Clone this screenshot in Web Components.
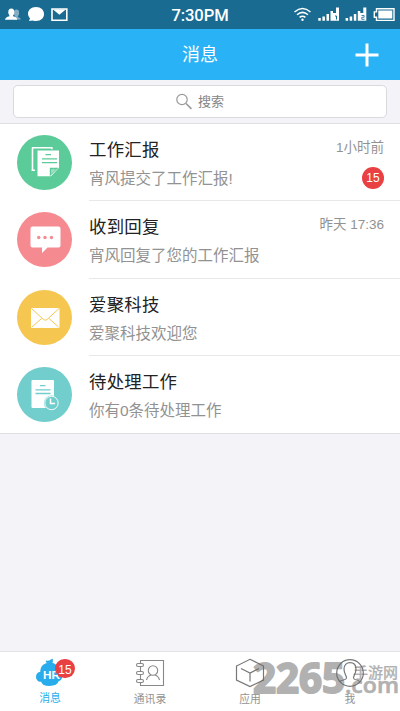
<!DOCTYPE html>
<html lang="zh-CN"><head><meta charset="utf-8"><title>消息</title>
<style>
html,body{margin:0;height:100%;overflow:hidden}
body{font-family:"Liberation Sans","Noto Sans CJK SC",sans-serif;background:#f3f3f8}
</style></head><body>
<message-app></message-app>
<script>
function define(name, html){
  const t=document.createElement('template');t.innerHTML=html;
  customElements.define(name,class extends HTMLElement{
    constructor(){super();this.attachShadow({mode:'open'}).append(t.content.cloneNode(true));}
  });
}
define('status-bar',`<style>
:host{display:grid;grid-template-columns:1fr auto 1fr;align-items:center;height:29px;background:#1a6b91;color:#fff;box-sizing:border-box}
.t{font:500 16.600px/29px Roboto,"Liberation Sans",sans-serif;letter-spacing:-.1px;padding-top:1px;height:28px}
svg{display:block}.r{justify-self:end}
</style>
<svg width="80" height="29" fill="#fff"><g opacity=".45"><ellipse cx="16.5" cy="13" rx="2.6" ry="3.4"/><path d="M13 19.5q0-2 2.3-2.6v-2h2.5v2q3 .7 3 2.6z"/></g><ellipse cx="11.3" cy="12.3" rx="3" ry="3.7"/><path d="M5 19.8q0-2.6 4.5-3.6V14H13v2.2q4.300 1 4.300 3.600z"/><path d="M36 7c5 0 8 3 8 7s-3 7-8 7q-2 0-3.300-.6L29 21l1-2.600q-2-1.800-2-4.400c0-4 3-7 8-7z"/><path d="M52 9h14.800v11.300H52z" fill="none" stroke="#fff" stroke-width="1.600"/><path d="M53 9.500l6.400 5.300 6.400-5.300" fill="#fff"/></svg>
<span class="t">7:30PM</span>
<svg class="r" width="110" height="29" viewBox="290 0 110 29" fill="#fff"><g fill="none" stroke="#fff" stroke-width="1.500"><path d="M294.500 12q8-7 16 0M297 14.800q5.500-4.800 11 0M299.600 17.400q2.900-2.400 5.800 0"/></g><circle cx="302.500" cy="19.700" r="1.200"/>
<path id="s" d="M318.300 18h2.500v2.700h-2.500zM322.400 16.500h2.500v4.200h-2.500zM326.500 14h2.500v6.700h-2.500zM330.500 11h2.500v9.700h-2.500zM333 13h3V7.500h3v13.200h-6z"/><path d="M335 16h1.500v3.500" fill="none" stroke="#1a6b91" stroke-width="1"/>
<use href="#s" x="27.300"/><path d="M361.500 15.500h2.600v1.800h-2.300v2h2.800" fill="none" stroke="#1a6b91" stroke-width=".8"/>
<path d="M376.500 8.700H394v11.700h-17.500v-3.200h-2.200v-5.300h2.200z" fill="none" stroke="#fff" stroke-width="1.400"/><path d="M378.300 10.500h14v8h-14z"/></svg>`);
define('nav-bar',`<style>
:host{display:grid;grid-template-columns:1fr auto 1fr;align-items:center;height:51px;background:#29b2f5;color:#fff}
.t{grid-column:2;font-size:18px;line-height:50px}svg{justify-self:end;margin-right:21px}
</style><span class="t"><slot></slot></span><svg width="24" height="24"><path d="M12 0.500v23M.500 12h23" stroke="#fff" stroke-width="3"/></svg>`);
define('search-box',`<style>
:host{display:block;height:44px;box-sizing:border-box;padding:5px 13px;border-bottom:1px solid #dedfe2;background:#f3f3f8}
div{height:33px;box-sizing:border-box;border:1px solid #d9d9de;border-radius:5px;background:#fff;display:flex;align-items:center;justify-content:center;gap:6px;color:#858585;font-size:13px;line-height:32px}
</style><div><svg width="16" height="17" fill="none" stroke="#999"><circle cx="6" cy="6.500" r="5.200" stroke-width="1.200"/><path d="M10 10.500l5.500 5.300" stroke-width="1.600"/></svg><span><slot></slot></span></div>`);
define('message-row',`<style>
:host{display:flex;height:77.33px;background:#fff;padding-left:17px}
.b{flex:1;margin-left:17px;display:flex;justify-content:space-between;box-sizing:border-box;border-bottom:1px solid var(--line,#e8e8e8);padding-right:16px}
.c{display:flex;flex-direction:column}
.h{font-size:17.400px;line-height:24px;color:#222;margin-top:14px;letter-spacing:.25px}
.s{font-size:15.500px;line-height:22px;color:#929292;margin-top:6px}
.r{align-items:flex-end}.w{font-size:13.500px;line-height:20px;color:#929292;margin-top:13.500px}
</style><slot name="icon"></slot><div class="b"><div class="c"><span class="h"><slot name="title"></slot></span><span class="s"><slot></slot></span></div><div class="c r"><span class="w"><slot name="time"></slot></span><slot name="badge"></slot></div></div>`);
define('count-badge',`<style>:host{display:grid;place-items:center;width:22px;height:22px;border-radius:50%;background:#e94043;color:#fff;font-size:12px;line-height:22px}</style><span><slot></slot></span>`);
define('round-icon',`<style>:host{display:block;width:55px;height:55px;margin-top:11px;flex:none;border-radius:50%;background:var(--c)}::slotted(svg){display:block}</style><slot></slot>`);
define('tab-item',`<style>:host{display:flex;flex-direction:column;align-items:center;flex:1;color:#929292;position:relative}
::slotted(svg){display:block;margin-top:6px}span{font-size:10.800px;line-height:16px;margin-top:var(--gap,2.500px)}::slotted(count-badge){position:absolute;left:55px;top:7px;width:20px;height:19px;z-index:1;border-radius:9.500px}</style><slot name="icon"></slot><span><slot></slot></span><slot name="badge"></slot>`);
define('tab-bar',`<style>:host{display:flex;height:60px;box-sizing:border-box;border-top:1px solid #e3e3e5;background:#fff}</style><slot></slot>`);
define('site-mark',`<style>:host{position:absolute;left:0;top:650px;width:400px;height:61px;pointer-events:none;opacity:.5}text{fill:#666;stroke:#666;stroke-linejoin:round;font-family:"Open Sans",Inter,sans-serif}</style>
<svg width="400" height="61"><text x="253" y="43" font-size="41" font-weight="700" stroke-width="2" textLength="92" lengthAdjust="spacingAndGlyphs">2265</text><text x="353" y="27.500" font-size="15" font-weight="500" stroke-width=".2" textLength="45" style="font-family:'Noto Sans CJK SC',sans-serif">手游网</text><text x="345" y="43" font-size="21" font-weight="600" stroke-width=".6" textLength="54" lengthAdjust="spacingAndGlyphs">.com</text></svg>`);
define('message-app',`<style>
:host{display:flex;flex-direction:column;height:711px;width:400px;position:relative;background:#f3f3f8}main{flex:1}
.last{--line:transparent}.list{border-bottom:1px solid #dedfe2;height:309px}
.ht{font:700 10.500px "Liberation Sans",sans-serif}
</style>
<status-bar></status-bar><nav-bar>消息</nav-bar><search-box>搜索</search-box>
<main><div class="list">
<message-row><round-icon slot="icon" style="--c:#5bcb99"><svg width="55" height="55" viewBox="1 .7 55 55"><path d="M16.500 36.500V13.500H36" fill="none" stroke="#fff" stroke-width="1.600" stroke-linejoin="round"/><path d="M36 13v2M15.700 36H19" stroke="#fff" stroke-width="1.500"/><path d="M21.500 16.300h21.500v17.200L35 42H21.500z" fill="#fff"/><path d="M29.500 20.300h5.500M26 24.600h15M26 28.300h15" stroke="#5bcb99" stroke-width="1.300"/><path d="M33.800 42v-8.500h8.700z" fill="#5bcb99"/><path d="M35.200 39.500V35h4.700z" fill="#fff" opacity=".45"/></svg></round-icon><span slot="title">工作汇报</span>宵风提交了工作汇报!<span slot="time">1小时前</span><count-badge slot="badge" style="margin-top:9px">15</count-badge></message-row>
<message-row><round-icon slot="icon" style="--c:#f58b91"><svg width="55" height="55"><path d="M15.500 14.500h26q2 0 2 2v17q0 2-2 2H30.500L25 41v-5.500h-9.500q-2 0-2-2v-17q0-2 2-2z" fill="#fff"/><g fill="#f58b91"><circle cx="21.700" cy="25.500" r="1.700"/><circle cx="28" cy="25.500" r="1.700"/><circle cx="34.500" cy="25.500" r="1.700"/></g></svg></round-icon><span slot="title">收到回复</span>宵风回复了您的工作汇报<span slot="time">昨天 17:36</span></message-row>
<message-row><round-icon slot="icon" style="--c:#f5c750"><svg width="55" height="55"><rect x="14" y="18" width="28.500" height="20" rx="1" fill="#fff"/><path d="M14.500 18.500l12 11q1.800 1.500 3.600 0L42 18.500M15 37L24.500 28.500M41.500 37L32 28.500" fill="none" stroke="#f5c750" stroke-width="1"/></svg></round-icon><span slot="title">爱聚科技</span>爱聚科技欢迎您</message-row>
<message-row class="last"><round-icon slot="icon" style="--c:#72cdcd"><svg width="55" height="55"><rect x="14.500" y="13" width="22.500" height="28" rx="1" fill="#fff"/><path d="M23 18.600h5.500M18.500 22.800h15M18.500 26.500h15" stroke="#72cdcd" stroke-width="1.300"/><circle cx="34.500" cy="36" r="7.600" fill="#72cdcd"/><circle cx="34.500" cy="36" r="6.700" fill="#72cdcd" stroke="#fff" stroke-width=".9"/><path d="M33.500 31.500v5h4.500" fill="none" stroke="#fff" stroke-width="1.500"/></svg></round-icon><span slot="title">待处理工作</span>你有0条待处理工作</message-row>
</div></main>
<tab-bar>
<tab-item style="color:#29aceb;--gap:1.5px"><svg slot="icon" width="30" height="30"><path d="M11 2.500q2.500 1 4.500-.8 1.200-1 2.500-.9-.8 1.500.2 2.300-1 .6-.6 1.600c3.600 1.200 5.700 4 5.700 7.400 3 1 5 3.500 4 7-.7 2.800-2 3.800-3.500 4q-1.500 4.900-9.300 4.900-7.500 0-8.300-4.200C3 24 1 21.800 1 18.800c0-3 2-4.700 4.300-5.100 0-4.300 2.400-7.700 6.700-8.700-1-.8-1.600-1.500-1-2.500z" fill="#29aceb"/><text class="ht" x="8" y="20.800" fill="#fff" textLength="17" lengthAdjust="spacingAndGlyphs">HR</text></svg>消息<count-badge slot="badge">15</count-badge></tab-item>
<tab-item><svg slot="icon" width="30" height="30" fill="none" stroke="#888" stroke-width="1.100"><path d="M5.500 5V2.500h23v25h-23V25M5.500 9v4M5.500 17v4"/><rect x="1.500" y="5.500" width="7" height="3" rx="1.500"/><rect x="1.500" y="13.500" width="7" height="3" rx="1.500"/><rect x="1.500" y="21.500" width="7" height="3" rx="1.500"/><circle cx="18" cy="12.500" r="4.700"/><path d="M11.500 22q1-4 4.500-5M24.500 22q-1-4-4.500-5"/></svg>通讯录</tab-item>
<tab-item><svg slot="icon" width="30" height="30" fill="none" stroke="#777" stroke-width="1.200"><path d="M15 1.300L28.500 8v14L15 28.500 1.500 22V8zM6 10.500l9 4.500 9-4.500M15 15v8.500"/></svg>应用</tab-item>
<tab-item><svg slot="icon" width="30" height="30" fill="none" stroke="#777" stroke-width="1.200"><circle cx="15" cy="15" r="13.300"/><path d="M5 23.500c2-2 6-1 6.500-3.500.3-2-2.500-4-2.500-9C9 7 11.500 4.700 15 4.700S21 7 21 11c0 5-2.800 7-2.500 9 .5 2.500 4.500 1.500 6.500 3.500"/></svg>我</tab-item>
</tab-bar><site-mark></site-mark>`);
</script></body></html>
